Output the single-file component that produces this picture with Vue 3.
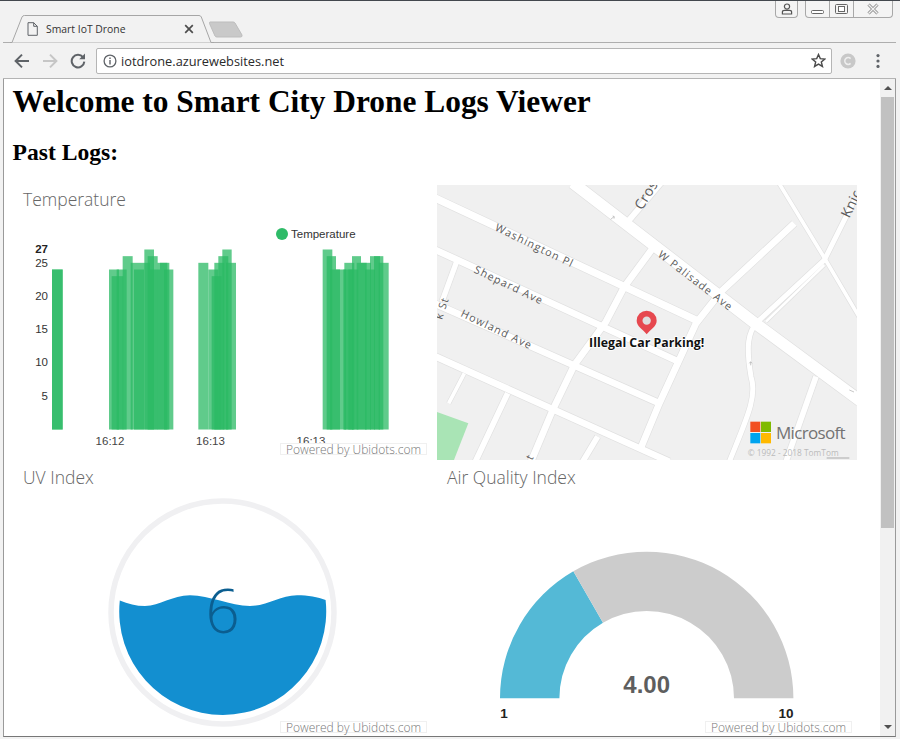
<script setup>
const raw = [
  [126,158,24],[126,158,24],
  [297,327,24],[305,340,23],[320,350,24],[338,368,26],[362,390,25],[372,402,24],[390,420,25],[403,432,27],[413,443,26],[420,450,24],[442,472,25],[450,478,25],[462,490,24],
  [565,595,25],[595,625,24],[605,635,23],[613,643,25],[625,655,26],[637,665,27],[648,678,25],
  [938,967,27],[950,978,26],[960,990,24],[978,1008,24],[1000,1030,24],[1003,1033,25],[1015,1045,24],[1026,1053,26],[1040,1070,25],[1053,1083,25],[1065,1095,24],[1080,1110,26],[1092,1120,26],[1106,1136,25]
]
const baseline = 429.5
const bars = raw.map(([a, b, v]) => ({
  x: 10 + a / 3,
  w: (b - a) / 3,
  y: baseline - v * 6.667,
  h: v * 6.667
}))
const ticks = [
  { v: '25', y: 266.5 }, { v: '20', y: 300 }, { v: '15', y: 333 }, { v: '10', y: 366 }, { v: '5', y: 400 }
]
const times = [{ t: '16:12', x: 110 }, { t: '16:13', x: 210.5 }, { t: '16:13', x: 311 }]

const roads = [
  { d: 'M410,8 L955,428 L1272,662', w: 34 },
  { d: 'M-5,53 L790,425', w: 22 },
  { d: 'M-5,208 L735,548', w: 20 },
  { d: 'M-5,370 L675,672', w: 20 },
  { d: 'M-5,528 L700,845', w: 20 },
  { d: 'M650,205 L565,320 L510,425 L415,555 L350,690 L285,845', w: 20 },
  { d: 'M1075,130 L855,335 L780,430 L670,670 L612,810', w: 20 },
  { d: 'M675,8 L578,122', w: 18 },
  { d: 'M62,245 L18,365', w: 16 },
  { d: 'M85,580 L38,670', w: 11 },
  { d: 'M215,640 L118,845', w: 17 },
  { d: 'M485,770 L440,845', w: 17 },
  { d: 'M1140,590 L1050,845', w: 17 },
  { d: 'M1255,60 L1165,240 L965,425 C935,455 930,500 945,590 C965,650 930,720 880,845', w: 15 },
  { d: 'M1028,8 L1160,225 L1272,415', w: 11 },
  { d: 'M990,425 L1165,255', w: 8 }
]
const labels = [
  { t: 'Washington Pl', tr: 'translate(175,150) rotate(26)', big: false },
  { t: 'W Palisade Ave', tr: 'translate(664,228) rotate(37.5)', big: false },
  { t: 'Shepard Ave', tr: 'translate(112,277) rotate(25.5)', big: false },
  { t: 'Howland Ave', tr: 'translate(72,408) rotate(25.5)', big: false },
  { t: 'Cros', tr: 'translate(618,92) rotate(-58)', big: true },
  { t: 'Knic', tr: 'translate(1240,116) rotate(-64)', big: true },
  { t: 'k St', tr: 'translate(18,420) rotate(-72)', big: false },
  { t: 't', tr: 'translate(288,842) rotate(-62)', big: false }
]
</script>

<template>
  <div class="window">
    <header class="tabstrip">
      <div class="tab">
        <svg class="tab-shape" viewBox="0 0 204 29" width="204" height="29">
          <path d="M0,28.5 H2 L12,3 Q12.7,1.5 14.5,1.5 H189 Q190.6,1.5 191.3,3 L201,28.5 H204" fill="#f2f2f2" stroke="#a6a6a6" />
        </svg>
        <div class="tab-body">
          <svg class="file-icon" viewBox="0 0 11 14" width="11" height="14">
            <path d="M1,.7 H6.7 L10.3,4.3 V13.3 H1 Z M6.7,.7 V4.3 H10.3" fill="none" stroke="#5f6368" stroke-width="1" />
          </svg>
          <span class="tab-title">Smart IoT Drone</span>
          <svg class="tab-close" viewBox="0 0 10 10" width="10" height="10">
            <path d="M1.2,1.2 L8.8,8.8 M8.8,1.2 L1.2,8.8" stroke="#4d4d4d" stroke-width="1.7" />
          </svg>
        </div>
      </div>
      <svg class="new-tab" viewBox="0 0 34 17" width="34" height="17">
        <path d="M1,1 H24 Q25.5,1 26,2 L33,14 Q33.5,16 31.5,16 H8 Q6.5,16 6,15 L.5,2.5 Q.2,1 1,1 Z" fill="#c9c9c9" stroke="#bdbdbd" />
      </svg>
      <div class="controls">
        <div class="ctl ctl-user">
          <svg viewBox="0 0 12 12" width="12" height="12">
            <circle cx="6" cy="3.6" r="2.6" fill="none" stroke="#555" stroke-width="1.2" />
            <path d="M1.4,11 V9 Q1.4,7.4 3.5,7.4 H8.5 Q10.6,7.4 10.6,9 V11 Z" fill="none" stroke="#555" stroke-width="1.2" />
          </svg>
        </div>
        <div class="ctl-group">
          <div class="ctl-cell ctl-min">
            <svg viewBox="0 0 13 4" width="13" height="4">
              <rect x=".5" y=".5" width="12" height="3" rx="1" fill="#fff" stroke="#666" />
            </svg>
          </div>
          <div class="ctl-cell ctl-max">
            <svg viewBox="0 0 13 10" width="13" height="10">
              <rect x=".5" y=".5" width="12" height="9" rx="1" fill="#f4f4f4" stroke="#666" />
              <rect x="3.5" y="2.5" width="6" height="5" fill="#fff" stroke="#666" />
            </svg>
          </div>
          <div class="ctl-cell ctl-x">
            <svg viewBox="0 0 12 12" width="12" height="12">
              <path d="M1.5,1.5 L10.5,10.5 M10.5,1.5 L1.5,10.5" stroke="#888" stroke-width="3" />
              <path d="M1.5,1.5 L10.5,10.5 M10.5,1.5 L1.5,10.5" stroke="#f2f2f2" stroke-width="1.4" />
            </svg>
          </div>
        </div>
      </div>
    </header>

    <nav class="toolbar">
      <div class="tool">
        <svg viewBox="0 0 16 16" width="16" height="16">
          <path d="M15,8 H2 M8,1.6 L1.6,8 L8,14.4" fill="none" stroke="#5f6368" stroke-width="2" />
        </svg>
      </div>
      <div class="tool">
        <svg viewBox="0 0 16 16" width="16" height="16">
          <path d="M1,8 H14 M8,1.6 L14.4,8 L8,14.4" fill="none" stroke="#c6c6c6" stroke-width="2" />
        </svg>
      </div>
      <div class="tool">
        <svg viewBox="0 0 16 16" width="16" height="16">
          <path d="M13,4.2 A6.3,6.3 0 1 0 14.3,8.6" fill="none" stroke="#5f6368" stroke-width="2" />
          <path d="M9.2,6.2 H15 V.4 Z" fill="#5f6368" />
        </svg>
      </div>
      <div class="omnibox">
        <svg class="info" viewBox="0 0 14 14" width="14" height="14">
          <circle cx="7" cy="7" r="5.9" fill="none" stroke="#5f6368" stroke-width="1.3" />
          <path d="M7,6 V10.4 M7,3.4 V5" stroke="#5f6368" stroke-width="1.4" />
        </svg>
        <span class="url">iotdrone.azurewebsites.net</span>
        <svg class="star" viewBox="0 0 16 16" width="15" height="15">
          <path d="M8,1.6 L9.9,6 L14.7,6.4 L11,9.6 L12.2,14.3 L8,11.8 L3.8,14.3 L5,9.6 L1.3,6.4 L6.1,6 Z" fill="none" stroke="#4a4a4a" stroke-width="1.5" />
        </svg>
      </div>
      <div class="tool tool-ext">
        <svg viewBox="0 0 16 16" width="16" height="16">
          <circle cx="8" cy="8" r="7.6" fill="#c8c8c8" />
          <path d="M10.6,5.6 A3.4,3.4 0 1 0 10.6,10.4" fill="none" stroke="#eee" stroke-width="1.5" />
        </svg>
      </div>
      <div class="tool">
        <svg viewBox="0 0 4 16" width="4" height="16">
          <circle cx="2" cy="2.6" r="1.6" fill="#5f6368" />
          <circle cx="2" cy="8" r="1.6" fill="#5f6368" />
          <circle cx="2" cy="13.4" r="1.6" fill="#5f6368" />
        </svg>
      </div>
    </nav>

    <div class="viewport">
      <main class="page">
        <h1>Welcome to Smart City Drone Logs Viewer</h1>
        <h2>Past Logs:</h2>
        <div class="grid">
          <section class="card">
            <h3 class="card-title">Temperature</h3>
            <svg class="plot" viewBox="13 213 424 247" width="424" height="247">
              <rect v-for="(b, i) in bars" :key="i" :x="b.x" :y="b.y" :width="b.w" :height="b.h" class="bar" />
              <text x="48" y="253" class="axis axis-max">27</text>
              <text v-for="t in ticks" :key="t.v" x="48" :y="t.y" class="axis">{{ t.v }}</text>
              <text v-for="(t, i) in times" :key="i" :x="t.x" y="445" class="time">{{ t.t }}</text>
              <circle cx="282" cy="234" r="6" class="legend-dot" />
              <text x="291" y="238" class="legend">Temperature</text>
            </svg>
            <div class="powered">Powered by Ubidots.com</div>
          </section>

          <section class="card card-map">
            <svg class="map" viewBox="3 15 1260 825" width="420" height="275">
              <rect x="0" y="0" width="1280" height="850" fill="#f0f0f0" />
              <polygon points="-5,693 97,730 50,850 -5,850" fill="#a9e4b5" />
              <g fill="none">
                <path v-for="(r, i) in roads" :key="'c' + i" :d="r.d" stroke="#e0e0e0" :stroke-width="r.w + 4" />
                <path v-for="(r, i) in roads" :key="'r' + i" :d="r.d" stroke="#fff" :stroke-width="r.w" />
              </g>
              <path d="M524,118 L534,110 M530,108 L535,110 L534,116 M944,556 V546 M940,550 L944,545 L948,550 M1240,630 L1254,636" fill="none" stroke="#aaa" stroke-width="2" />
              <text v-for="l in labels" :key="l.t" :transform="l.tr" :class="['street', { 'street-big': l.big }]">{{ l.t }}</text>
              <path d="M632,463 C620,446 602,440 602,422 A30,30 0 1 1 662,422 C662,440 644,446 632,463 Z" fill="#e6484f" />
              <circle cx="632" cy="422" r="12.5" fill="#dedede" />
              <text x="632" y="502" class="pin-label">Illegal Car Parking!</text>
              <rect x="943" y="725" width="30" height="31" fill="#f25022" />
              <rect x="975" y="725" width="30" height="31" fill="#7fba00" />
              <rect x="943" y="759" width="30" height="31" fill="#00a4ef" />
              <rect x="975" y="759" width="30" height="31" fill="#ffb900" />
              <text x="1020" y="777" class="ms">Microsoft</text>
              <text x="935" y="828" class="copy">© 1992 - 2018 TomTom</text>
              <path d="M1172,834 H1240" stroke="#aaa" stroke-width="3" />
            </svg>
          </section>

          <section class="card card-low">
            <h3 class="card-title">UV Index</h3>
            <svg class="plot" viewBox="13 488 424 247" width="424" height="247">
              <circle cx="222.5" cy="612.5" r="111.5" fill="none" stroke="#f0f0f2" stroke-width="5.5" />
              <path d="M119.8,600.5 C128,604 136,606 145,606 C160,606 172,595.3 190,595.3 C210,595.3 230,606 250,606 C268,606 280,595.3 297,595.3 C308,595.3 318,597 325.6,600 A103.5,103.5 0 1 1 119.8,600.5 Z" fill="#138fd0" />
              <text x="222.7" y="633" class="uv-value">6</text>
            </svg>
            <div class="powered powered-low">Powered by Ubidots.com</div>
          </section>

          <section class="card card-low">
            <h3 class="card-title">Air Quality Index</h3>
            <svg class="plot" viewBox="437 488 420 247" width="420" height="247">
              <path d="M500,698.3 A146.7,146.7 0 0 1 573.35,571.3 L603,622.7 A87.3,87.3 0 0 0 559.4,698.3 Z" fill="#54b9d6" />
              <path d="M573.35,571.3 A146.7,146.7 0 0 1 793.4,698.3 L734,698.3 A87.3,87.3 0 0 0 603,622.7 Z" fill="#cccccc" />
              <text x="646.7" y="692.7" class="gauge-value">4.00</text>
              <text x="504" y="717.5" class="gauge-end">1</text>
              <text x="786" y="717.5" class="gauge-end">10</text>
            </svg>
            <div class="powered powered-low powered-right">Powered by Ubidots.com</div>
          </section>
        </div>
      </main>
      <aside class="scrollbar">
        <div class="sb-btn"><span class="tri tri-up"></span></div>
        <div class="sb-thumb"></div>
        <div class="sb-rest"></div>
        <div class="sb-btn"><span class="tri tri-down"></span></div>
      </aside>
    </div>
  </div>
</template>

<style scoped>
.window {
  width: 900px;
  height: 739px;
  box-sizing: border-box;
  display: flex;
  flex-direction: column;
  overflow: hidden;
  background: #f2f2f2;
  border-top: 1px solid #43484e;
  padding: 0 4px 2px 3px;
  font-family: "Open Sans", "Liberation Sans", sans-serif;
}

/* tab strip */
.tabstrip {
  display: flex;
  align-items: flex-end;
  height: 42px;
  flex: none;
  box-sizing: border-box;
  border-bottom: 1px solid #aeaeae;
  padding-left: 7px;
}
.tab {
  display: grid;
  width: 204px;
  height: 29px;
  margin-bottom: -1px;
  flex: none;
  z-index: 1;
}
.tab-shape {
  grid-area: 1 / 1;
  display: block;
}
.tab-body {
  grid-area: 1 / 1;
  display: flex;
  align-items: center;
  padding: 1px 0 0 17px;
}
.file-icon {
  flex: none;
}
.tab-title {
  margin-left: 8px;
  font-size: 10.4px;
  color: #333;
  white-space: nowrap;
}
.tab-close {
  margin-left: auto;
  margin-right: 20px;
  flex: none;
}
.new-tab {
  flex: none;
  margin: 0 0 4px -5px;
}
.controls {
  display: flex;
  align-self: flex-start;
  align-items: flex-start;
  margin-left: auto;
  margin-right: 3px;
  gap: 7px;
}
.ctl,
.ctl-group {
  height: 17px;
  box-sizing: border-box;
  border: 1px solid #a8a8a8;
  border-top: none;
  border-radius: 0 0 4px 4px;
  background: #f4f4f4;
}
.ctl {
  width: 23px;
  display: flex;
  align-items: center;
  justify-content: center;
}
.ctl-group {
  display: flex;
  width: 88px;
}
.ctl-cell {
  display: flex;
  align-items: center;
  justify-content: center;
}
.ctl-min {
  width: 24px;
  border-right: 1px solid #a8a8a8;
  padding-top: 6px;
  box-sizing: border-box;
}
.ctl-max {
  width: 24px;
  border-right: 1px solid #a8a8a8;
  padding-bottom: 1px;
  box-sizing: border-box;
}
.ctl-x {
  flex: 1;
}

/* toolbar */
.toolbar {
  display: flex;
  align-items: center;
  height: 36px;
  flex: none;
  box-sizing: border-box;
  border-bottom: 1px solid #b4b4b4;
  padding-left: 5px;
  background: #f2f2f2;
}
.tool {
  width: 28px;
  flex: none;
  display: flex;
  align-items: center;
  justify-content: center;
}
.tool-ext {
  width: 32px;
}
.omnibox {
  flex: none;
  width: 736px;
  height: 26px;
  margin-left: 4px;
  box-sizing: border-box;
  display: flex;
  align-items: center;
  padding: 0 5px 0 6px;
  background: #fff;
  border: 1px solid #b5b5b5;
  border-radius: 2px;
}
.info {
  flex: none;
}
.url {
  margin-left: 4px;
  font-size: 12.8px;
  color: #2a2a2a;
  white-space: nowrap;
}
.star {
  margin-left: auto;
  flex: none;
}

/* viewport */
.viewport {
  flex: 1;
  min-height: 0;
  display: flex;
  background: #fff;
  border-left: 1px solid #9a9a9a;
  border-right: 1px solid #9a9a9a;
  border-bottom: 1px solid #777;
}
.page {
  flex: 1;
  min-width: 0;
  overflow: hidden;
  padding-left: 9px;
}
h1 {
  margin: 4px 0 0 -0.5px;
  font: bold 31.4px/37px "Liberation Serif", serif;
  color: #000;
  white-space: nowrap;
}
h2 {
  margin: 18px 0 0 -0.5px;
  font: bold 23.6px/28px "Liberation Serif", serif;
  color: #000;
}
.grid {
  display: grid;
  grid-template-columns: 424px 420px;
  grid-auto-rows: 275px;
  margin-top: 19px;
}
.card {
  position: relative;
  overflow: hidden;
  background: #fff;
}
.card-title {
  margin: 0;
  height: 28px;
  padding: 1px 0 0 10px;
  box-sizing: border-box;
  font-size: 17.5px;
  line-height: 26px;
  font-weight: 300;
  color: #666;
}
.card-low .card-title {
  padding-top: 4px;
}
.plot,
.map {
  display: block;
}
.powered {
  position: absolute;
  right: 10px;
  bottom: 5px;
  width: 147px;
  height: 12px;
  background: #fff;
  border: 1px solid #f0f0f0;
  box-sizing: border-box;
  font-size: 12px;
  line-height: 11px;
  font-weight: 300;
  text-align: center;
  color: #777;
  white-space: nowrap;
}
.powered-low {
  bottom: 2px;
}
.powered-right {
  right: 5px;
}

/* chart */
.bar {
  fill: #2bb964;
  fill-opacity: 0.75;
}
.axis {
  font: 11.5px "Liberation Sans", sans-serif;
  fill: #333;
  text-anchor: end;
}
.axis-max {
  font-weight: bold;
  fill: #222;
}
.time {
  font: 11.5px "Liberation Sans", sans-serif;
  fill: #444;
  text-anchor: middle;
}
.legend-dot {
  fill: #2fbb68;
}
.legend {
  font: 11.5px "Liberation Sans", sans-serif;
  fill: #333;
}

/* map */
.street {
  font: 32px "Open Sans", sans-serif;
  letter-spacing: 3.5px;
  fill: #5a5a5a;
}
.street-big {
  font-size: 42px;
  letter-spacing: 1px;
}
.pin-label {
  font: bold 37px "Open Sans", sans-serif;
  text-anchor: middle;
  fill: #111;
  stroke: #fff;
  stroke-width: 5px;
  paint-order: stroke;
}
.ms {
  font: 51px "Open Sans", sans-serif;
  letter-spacing: -2px;
  fill: #737373;
}
.copy {
  font: 25px "Open Sans", sans-serif;
  fill: #bbb;
}

/* gauges */
.uv-value {
  font: 300 60px "Open Sans", sans-serif;
  text-anchor: middle;
  fill: #0b5e90;
}
.gauge-value {
  font: bold 24px "Liberation Sans", sans-serif;
  text-anchor: middle;
  fill: #5e5e5e;
}
.gauge-end {
  font: bold 13.5px "Liberation Sans", sans-serif;
  text-anchor: middle;
  fill: #222;
}

/* scrollbar */
.scrollbar {
  width: 15px;
  flex: none;
  display: flex;
  flex-direction: column;
  background: #f1f1f1;
}
.sb-btn {
  height: 18px;
  flex: none;
  display: flex;
  align-items: center;
  justify-content: center;
}
.tri {
  width: 0;
  height: 0;
  border-left: 4px solid transparent;
  border-right: 4px solid transparent;
}
.tri-up {
  border-bottom: 4px solid #505050;
}
.tri-down {
  border-top: 4px solid #505050;
}
.sb-thumb {
  height: 431px;
  margin: 0 1px;
  flex: none;
  background: #c1c1c1;
}
.sb-rest {
  flex: 1;
}
</style>

<style>
html,
body {
  margin: 0;
  overflow: hidden;
}
</style>
